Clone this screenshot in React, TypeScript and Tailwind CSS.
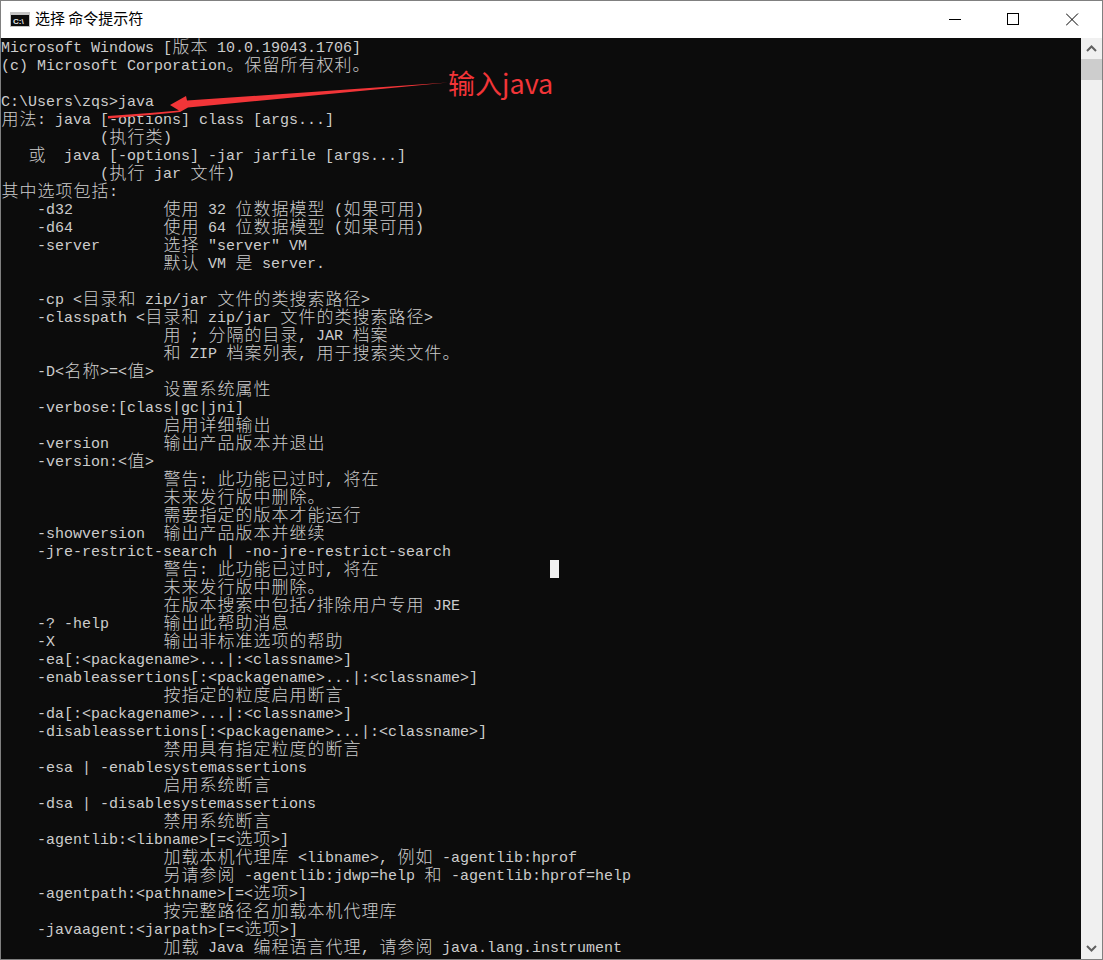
const LINES = [
  'Microsoft Windows [版本 10.0.19043.1706]',
  '(c) Microsoft Corporation。保留所有权利。',
  '',
  'C:\\Users\\zqs>java',
  '用法: java [-options] class [args...]',
  '           (执行类)',
  '   或  java [-options] -jar jarfile [args...]',
  '           (执行 jar 文件)',
  '其中选项包括:',
  '    -d32          使用 32 位数据模型 (如果可用)',
  '    -d64          使用 64 位数据模型 (如果可用)',
  '    -server       选择 "server" VM',
  '                  默认 VM 是 server.',
  '',
  '    -cp <目录和 zip/jar 文件的类搜索路径>',
  '    -classpath <目录和 zip/jar 文件的类搜索路径>',
  '                  用 ; 分隔的目录, JAR 档案',
  '                  和 ZIP 档案列表, 用于搜索类文件。',
  '    -D<名称>=<值>',
  '                  设置系统属性',
  '    -verbose:[class|gc|jni]',
  '                  启用详细输出',
  '    -version      输出产品版本并退出',
  '    -version:<值>',
  '                  警告: 此功能已过时, 将在',
  '                  未来发行版中删除。',
  '                  需要指定的版本才能运行',
  '    -showversion  输出产品版本并继续',
  '    -jre-restrict-search | -no-jre-restrict-search',
  '                  警告: 此功能已过时, 将在                   █',
  '                  未来发行版中删除。',
  '                  在版本搜索中包括/排除用户专用 JRE',
  '    -? -help      输出此帮助消息',
  '    -X            输出非标准选项的帮助',
  '    -ea[:<packagename>...|:<classname>]',
  '    -enableassertions[:<packagename>...|:<classname>]',
  '                  按指定的粒度启用断言',
  '    -da[:<packagename>...|:<classname>]',
  '    -disableassertions[:<packagename>...|:<classname>]',
  '                  禁用具有指定粒度的断言',
  '    -esa | -enablesystemassertions',
  '                  启用系统断言',
  '    -dsa | -disablesystemassertions',
  '                  禁用系统断言',
  '    -agentlib:<libname>[=<选项>]',
  '                  加载本机代理库 <libname>, 例如 -agentlib:hprof',
  '                  另请参阅 -agentlib:jdwp=help 和 -agentlib:hprof=help',
  '    -agentpath:<pathname>[=<选项>]',
  '                  按完整路径名加载本机代理库',
  '    -javaagent:<jarpath>[=<选项>]',
  '                  加载 Java 编程语言代理, 请参阅 java.lang.instrument',
];

function Row({ text }: { text: string }) {
  const parts = text.split(/([\u3000-\u9fff█])/).filter(Boolean);
  return (
    <div className="h-[18px] whitespace-pre">
      {parts.map((p, i) =>
        p === '█' ? (
          <span key={i} className="inline-block w-[9px] h-[18px] align-top bg-[#f2f2f2]" />
        ) : /[\u3000-\u9fff]/.test(p) ? (
          <span
            key={i}
            className="inline-block w-[18px] h-[18px] align-top text-center text-[17px] leading-[16px] font-light"
            style={{ fontFamily: '"Noto Sans CJK SC", sans-serif' }}
          >
            {p}
          </span>
        ) : (
          <span key={i} className="inline-block h-[18px] align-top leading-[22px]">
            {p}
          </span>
        ),
      )}
    </div>
  );
}

export default function App() {
  return (
    <div className="relative w-[1103px] h-[960px] flex flex-col overflow-hidden border border-[#808080] bg-white font-['Liberation_Mono',monospace]">
      <div className="h-[37px] shrink-0 flex items-center bg-white text-black">
        <svg className="ml-[9px] shrink-0" width="20" height="15" viewBox="0 0 20 15">
          <rect x="0" y="0" width="20" height="15" fill="#c4c4c4" />
          <rect x="1" y="3" width="18" height="11" fill="#0c0c0c" />
          <text x="3" y="11.5" fontSize="8" fontWeight="700" fill="#e8e8e8" fontFamily="Liberation Sans, sans-serif">C:\</text>
        </svg>
        <div className="ml-[5px] mb-[3px] text-[15px] leading-[20px] font-['Noto_Sans_CJK_SC',sans-serif]">选择 命令提示符</div>
        <div className="ml-auto flex h-full items-center">
          <svg width="58" height="37" viewBox="0 0 58 37"><path d="M0 18.5H12" stroke="#000" /></svg>
          <svg width="59" height="37" viewBox="0 0 59 37"><rect x="0.5" y="12.5" width="11" height="11" fill="none" stroke="#000" /></svg>
          <svg width="36" height="37" viewBox="0 0 36 37"><path d="M0 12.5L12 24.5M12 12.5L0 24.5" stroke="#000" /></svg>
        </div>
      </div>
      <div className="flex flex-1 min-h-0">
        <div className="flex-1 min-w-0 bg-[#0c0c0c] text-[#cccccc] text-[15px] overflow-hidden">
          {LINES.map((l, i) => (
            <Row key={i} text={l} />
          ))}
        </div>
        <div className="w-[21px] shrink-0 flex flex-col bg-[#f0f0f0]">
          <div className="h-[21px] flex items-center justify-center">
            <svg width="11" height="7" viewBox="0 0 11 7"><path d="M1 6L5.5 1.5L10 6" fill="none" stroke="#606060" strokeWidth="2" /></svg>
          </div>
          <div className="h-[21px] bg-[#cdcdcd]" />
          <div className="flex-1" />
          <div className="h-[21px] flex items-center justify-center">
            <svg width="11" height="7" viewBox="0 0 11 7"><path d="M1 1L5.5 5.5L10 1" fill="none" stroke="#606060" strokeWidth="2" /></svg>
          </div>
        </div>
      </div>
      <svg className="absolute pointer-events-none" width="460" height="125" viewBox="0 0 460 125" style={{ left: -1, top: -1 }}>
        <path d="M170 105L186 96L187 100.5L448 82.5L188 107.5L180 112L150 115L108 118.5L108 116L150 113L179 110.5Z" fill="#f23538" />
      </svg>
      <div className="absolute left-[447px] top-[65px] text-[27px] leading-[34px] text-[#f23538] font-['Noto_Sans_CJK_SC',sans-serif]">
        输入java
      </div>
    </div>
  );
}
